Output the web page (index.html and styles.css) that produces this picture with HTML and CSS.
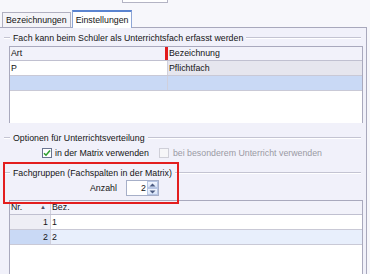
FILE: index.html
```html
<!DOCTYPE html>
<html lang="de">
<head>
  <meta charset="UTF-8">
  <link rel="stylesheet" href="styles.css">
</head>
<body>
  <div class="top"><div class="topbox"></div></div>

  <div class="tabs">
    <div class="tab">Bezeichnungen</div>
    <div class="tab active">Einstellungen</div>
  </div>

  <div class="panel">
    <!-- Fach kann ... -->
    <div class="gtitle"><span class="lead"></span><span>Fach kann beim Schüler als Unterrichtsfach erfasst werden</span><span class="rule"></span></div>
    <div class="grid grid1">
      <div class="row head">
        <div class="cell c-art mark">Art</div>
        <div class="cell c-bez">Bezeichnung</div>
      </div>
      <div class="row">
        <div class="cell c-art">P</div>
        <div class="cell c-bez ro">Pflichtfach</div>
      </div>
      <div class="row sel">
        <div class="cell c-art"></div>
        <div class="cell c-bez"></div>
      </div>
      <div class="fill"></div>
    </div>

    <!-- Optionen -->
    <div class="gtitle g2"><span class="lead"></span><span>Optionen für Unterrichtsverteilung</span><span class="rule"></span></div>
    <div class="checks">
      <span class="cb on"><svg width="8" height="8" viewBox="0 0 8 8"><path d="M1 4.2 L3 6.2 L7 1.6" fill="none" stroke="#2f9e2f" stroke-width="1.6"/></svg></span>
      <span class="cblabel">in der Matrix verwenden</span>
      <span class="cb off"></span>
      <span class="cblabel dis">bei besonderem Unterricht verwenden</span>
    </div>

    <!-- Fachgruppen -->
    <div class="gtitle g3"><span class="lead"></span><span>Fachgruppen (Fachspalten in der Matrix)</span><span class="rule"></span></div>
    <div class="anzahl">
      <span>Anzahl</span>
      <div class="spin">
        <span class="val">2</span>
        <div class="btns">
          <span class="btn"><svg width="7" height="4" viewBox="0 0 7 4"><path d="M0.5 3.5 L3.5 0.5 L6.5 3.5 Z" fill="#4a5a80"/></svg></span>
          <span class="btn"><svg width="7" height="4" viewBox="0 0 7 4"><path d="M0.5 0.5 L3.5 3.5 L6.5 0.5 Z" fill="#4a5a80"/></svg></span>
        </div>
      </div>
    </div>

    <div class="grid grid2">
      <div class="row head">
        <div class="cell c-nr">Nr.<span class="sort">▲</span></div>
        <div class="cell">Bez.</div>
      </div>
      <div class="row">
        <div class="cell c-nr num">1</div>
        <div class="cell">1</div>
      </div>
      <div class="row sel">
        <div class="cell c-nr num">2</div>
        <div class="cell">2</div>
      </div>
    </div>
  </div>

  <!-- Markierung -->
  <div class="highlight"></div>
</body>
</html>
```

FILE: styles.css
```css
html, body {
	margin: 0;
	padding: 0;
}

body {
	position: relative;
	width: 370px;
	height: 274px;
	overflow: hidden;
	background-color: #f7f7fb;
	font-family: "Liberation Sans", Arial, sans-serif;
	font-size: 8.8px;
	color: #141414;
}

.top {
	height: 10px;
	overflow: hidden;
}
.topbox {
	margin-top: -12px;
	margin-left: 122px;
	width: 46px;
	height: 15px;
	box-sizing: border-box;
	border: 1px solid #b4b4c4;
	background: #fff;
}

/* Reiter */
.tabs {
	display: flex;
	align-items: flex-end;
	height: 17px;
	padding-left: 2px;
	gap: 1px;
}
.tab {
	height: 15px;
	box-sizing: border-box;
	padding: 0 3px;
	line-height: 14px;
	border: 1px solid #b0b0c0;
	border-bottom: none;
	background: #f4f4f8;
}
.tab.active {
	position: relative;
	z-index: 1;
	height: 18px;
	margin-bottom: -1px;
	line-height: 16px;
	padding: 0 3px 0 3px;
	border-color: #8ea6d6;
	border-top: 2px solid #5b84d0;
	background: #fff;
}

.panel {
	width: 367px;
	height: 247px;
	box-sizing: border-box;
	border-top: 1px solid #a8a8bc;
	border-right: 1px solid #a8a8bc;
	background-color: #f1f1fa;
}

/* Gruppentitel */
.gtitle {
	display: flex;
	align-items: center;
	gap: 3px;
	height: 13px;
	margin: 3px 5px 0 4px;
	white-space: nowrap;
}
.gtitle .lead {
	width: 6px;
	border-top: 1px solid #c4c4d2;
	border-bottom: 1px solid #fff;
}
.gtitle .rule {
	flex: 1;
	border-top: 1px solid #c4c4d2;
	border-bottom: 1px solid #fff;
}
.gtitle.g2 {
	margin-top: 8px;
}
.gtitle.g3 {
	margin-top: 7px;
}

/* Tabellen */
.grid {
	margin-left: 9px;
	width: 354px;
	box-sizing: border-box;
	border: 1px solid #a9a9bd;
	border-bottom: none;
	background: #fff;
}
.grid1 {
	margin-top: 2px;
	height: 77px;
}
.grid2 {
	margin-top: 4px;
	height: 80px;
}
.row {
	display: flex;
	height: 15px;
	box-sizing: border-box;
	border-bottom: 1px solid #c9c9d6;
	line-height: 14px;
}
.row.head {
	height: 14px;
	line-height: 13px;
	background: #f2f2fa;
	border-bottom-color: #c0c0d0;
}
.cell {
	flex: 1;
	padding-left: 1px;
	white-space: nowrap;
	overflow: hidden;
}
.c-art {
	flex: none;
	width: 156px;
	border-right: 1px solid #d0d0dc;
}
.head .c-art.mark {
	width: 154px;
	border-right: 3px solid #e21b1b;
}
.c-bez {
	padding-left: 1px;
}
.c-bez.ro {
	background: #e6e6ee;
}
.row.sel .cell {
	background: #c9d9f5;
}
.fill {
	height: 31px;
	background: #fff;
}

.c-nr {
	flex: none;
	width: 41px;
	box-sizing: border-box;
	border-right: 1px solid #d0d0dc;
}
.c-nr.num {
	text-align: right;
	padding-right: 2px;
	background: #eeeef5;
}
.grid2 .row.sel .cell {
	background: #e8effc;
}
.grid2 .row.sel .c-nr.num {
	background: #c9d9f5;
}
.sort {
	float: right;
	margin-right: 4px;
	font-size: 6px;
	color: #505068;
}

/* Optionen */
.checks {
	display: flex;
	align-items: center;
	height: 12px;
	margin-top: 3px;
	padding-left: 42px;
	white-space: nowrap;
}
.cb {
	display: flex;
	align-items: center;
	justify-content: center;
	width: 10px;
	height: 10px;
	box-sizing: border-box;
	border: 1px solid #6a7490;
	background: #fff;
}
.cb.off {
	margin-left: 10px;
	border-color: #cfcfd8;
	background: #f6f6f8;
}
.cblabel {
	margin-left: 3px;
}
.cblabel.dis {
	margin-left: 4px;
	color: #9a9aa4;
}

/* Anzahl */
.anzahl {
	display: flex;
	align-items: center;
	gap: 9px;
	height: 16px;
	margin-top: 1px;
	padding-left: 90px;
}
.spin {
	display: flex;
	width: 33px;
	height: 16px;
	box-sizing: border-box;
	border: 1px solid #a6afc8;
	background: #fff;
}
.spin .val {
	flex: 1;
	text-align: right;
	line-height: 14px;
	padding-right: 1px;
}
.btns {
	display: flex;
	flex-direction: column;
	width: 11px;
}
.btn {
	flex: 1;
	display: flex;
	align-items: center;
	justify-content: center;
	border: 1px solid #b7c6e4;
	background: linear-gradient(#f2f6fe, #d8e4f8);
}

/* Markierung (rote Umrandung) */
.highlight {
	position: absolute;
	left: 3px;
	top: 162px;
	width: 176px;
	height: 42px;
	box-sizing: border-box;
	border: 2px solid #e31e1e;
}
```
